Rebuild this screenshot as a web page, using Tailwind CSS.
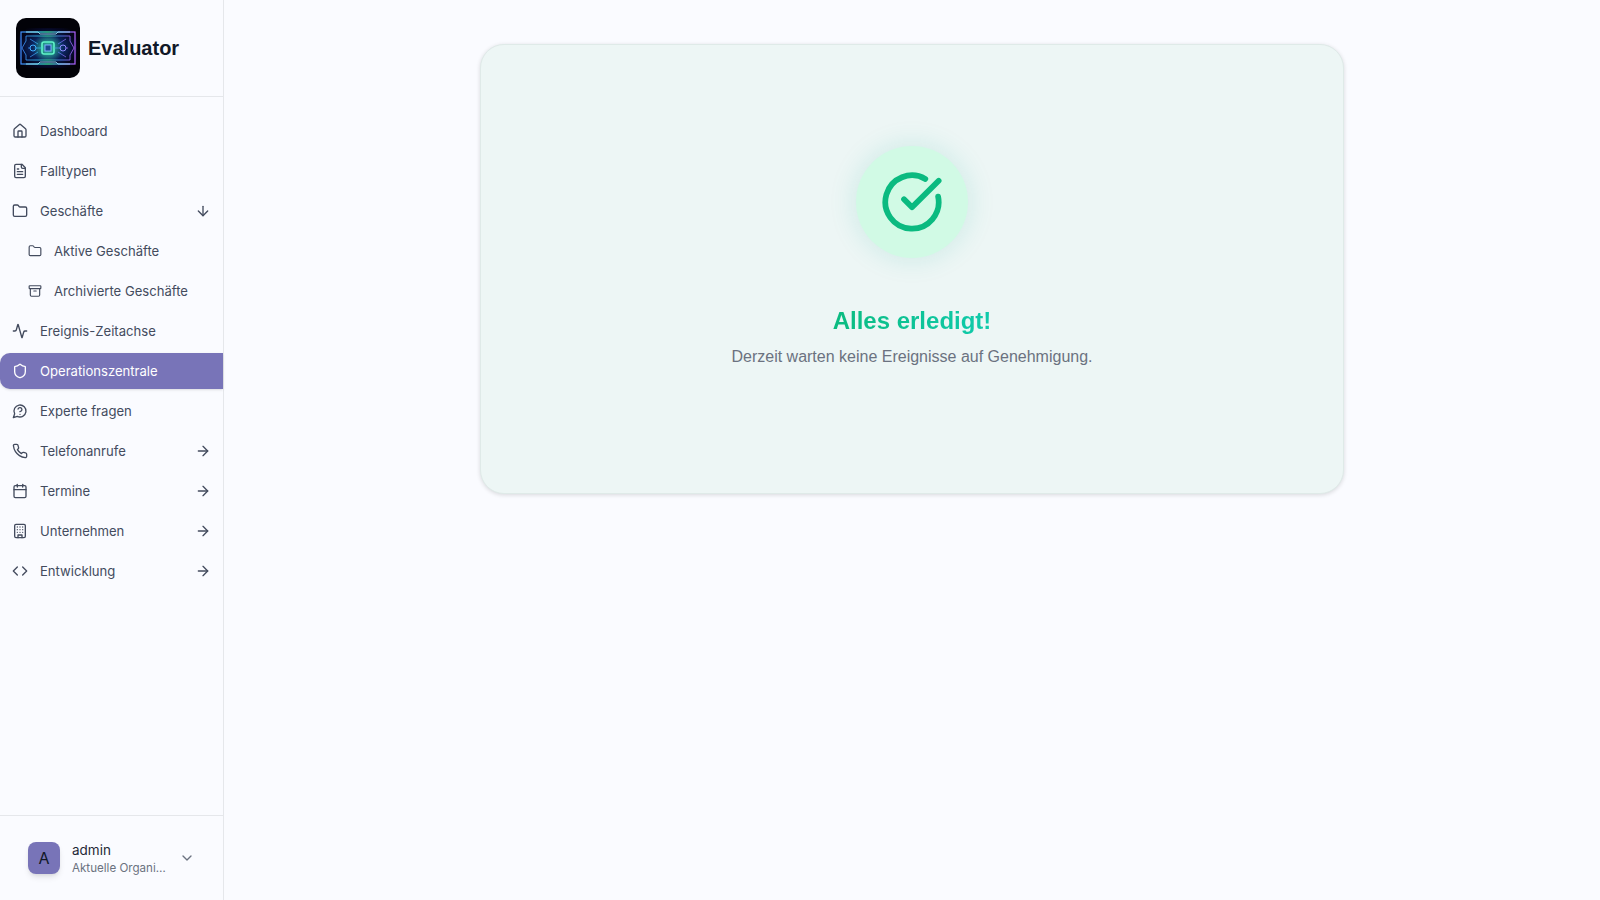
<!DOCTYPE html>
<html lang="de">
<head>
<meta charset="utf-8">
<script src="https://cdn.jsdelivr.net/npm/@tailwindcss/browser@4"></script>
<title>Evaluator</title>
</head>
<body class="bg-[#fafbff] font-['Inter',sans-serif] antialiased">
<div class="flex h-[900px] w-[1600px] overflow-hidden">
  <aside class="flex h-full w-[224px] flex-none flex-col border-r border-[#e5e7eb] bg-[#fafbff]">
    <div class="flex h-[97px] flex-none items-center gap-2 border-b border-[#e5e7eb] pl-4">
      <svg class="h-[60px] w-[64px] flex-none rounded-[10px]" viewBox="0 0 64 60" fill="none">
        <defs>
          <linearGradient id="lg" x1="0" y1="0" x2="1" y2="0">
            <stop offset="0" stop-color="#3f8cff"/><stop offset=".3" stop-color="#35c8f5"/><stop offset=".5" stop-color="#40f0a0"/><stop offset=".75" stop-color="#5a8cff"/><stop offset="1" stop-color="#b060ff"/>
          </linearGradient>
          <radialGradient id="rg" cx=".5" cy=".5" r=".62">
            <stop offset="0" stop-color="#0f5a78"/><stop offset=".45" stop-color="#0b2560"/><stop offset=".8" stop-color="#050620"/><stop offset="1" stop-color="#020208"/>
          </radialGradient>
          <radialGradient id="gl" cx=".5" cy=".5" r=".5">
            <stop offset="0" stop-color="#40f0b0" stop-opacity=".75"/><stop offset="1" stop-color="#40f0b0" stop-opacity="0"/>
          </radialGradient>
        </defs>
        <rect width="64" height="60" fill="#020208"/>
        <rect x="3" y="10" width="58" height="40" fill="url(#rg)"/>
        <circle cx="32" cy="30" r="15" fill="url(#gl)"/>
        <rect x="5" y="14" width="54" height="32" stroke="url(#lg)" stroke-width="1.2"/>
        <path d="M10 18H54V23L58 30L54 37V42H10V37L6 30L10 23Z" stroke="url(#lg)" stroke-width=".8"/>
        <path d="M10 14H22L24 16H40L42 14H54M10 46H22L24 44H40L42 46H54" stroke="#a8f0ff" stroke-width=".8"/>
        <rect x="26" y="24" width="12" height="12" rx="2" stroke="#60f5c8" stroke-width="1.6"/>
        <rect x="29" y="27" width="6" height="6" fill="#1a4a90" stroke="#7fa5ff" stroke-width="1"/>
        <circle cx="17" cy="30" r="3" stroke="#40b0ff" stroke-width="1"/>
        <circle cx="47" cy="30" r="3" stroke="#8f8cff" stroke-width="1"/>
        <path d="M12 30H14M20 30H26M38 30H44M50 30H52M14 21L22 26M50 21L42 26M14 39L22 34M50 39L42 34" stroke="url(#lg)" stroke-width=".7"/>
      </svg>
      <span class="font-['Liberation_Sans',sans-serif] text-[20px] font-bold text-[#111827]">Evaluator</span>
    </div>
    <nav class="flex flex-1 flex-col gap-1 py-4 text-[13.1px] leading-[21px] text-[#434b5e]">
      <a class="flex h-9 items-center gap-3 pl-3 pr-3">
        <svg class="h-4 w-4 flex-none" viewBox="0 0 24 24" fill="none" stroke="currentColor" stroke-width="2" stroke-linecap="round" stroke-linejoin="round"><path d="M15 21v-8a1 1 0 0 0-1-1h-4a1 1 0 0 0-1 1v8"/><path d="M3 10a2 2 0 0 1 .709-1.528l7-5.999a2 2 0 0 1 2.582 0l7 5.999A2 2 0 0 1 21 10v9a2 2 0 0 1-2 2H5a2 2 0 0 1-2-2z"/></svg>
        <span>Dashboard</span>
      </a>
      <a class="flex h-9 items-center gap-3 pl-3 pr-3">
        <svg class="h-4 w-4 flex-none" viewBox="0 0 24 24" fill="none" stroke="currentColor" stroke-width="2" stroke-linecap="round" stroke-linejoin="round"><path d="M15 2H6a2 2 0 0 0-2 2v16a2 2 0 0 0 2 2h12a2 2 0 0 0 2-2V7Z"/><path d="M14 2v4a2 2 0 0 0 2 2h4"/><path d="M10 9H8"/><path d="M16 13H8"/><path d="M16 17H8"/></svg>
        <span>Falltypen</span>
      </a>
      <a class="flex h-9 items-center gap-3 pl-3 pr-3">
        <svg class="h-4 w-4 flex-none" viewBox="0 0 24 24" fill="none" stroke="currentColor" stroke-width="2" stroke-linecap="round" stroke-linejoin="round"><path d="M20 20a2 2 0 0 0 2-2V8a2 2 0 0 0-2-2h-7.9a2 2 0 0 1-1.69-.9L9.6 3.9A2 2 0 0 0 7.93 3H4a2 2 0 0 0-2 2v13a2 2 0 0 0 2 2Z"/></svg>
        <span class="flex-1">Geschäfte</span>
        <svg class="h-4 w-4 flex-none" viewBox="0 0 24 24" fill="none" stroke="currentColor" stroke-width="2" stroke-linecap="round" stroke-linejoin="round"><path d="M12 5v14"/><path d="m19 12-7 7-7-7"/></svg>
      </a>
      <a class="flex h-9 items-center gap-3 pl-7 pr-3">
        <svg class="h-[14px] w-[14px] flex-none" viewBox="0 0 24 24" fill="none" stroke="currentColor" stroke-width="2" stroke-linecap="round" stroke-linejoin="round"><path d="M20 20a2 2 0 0 0 2-2V8a2 2 0 0 0-2-2h-7.9a2 2 0 0 1-1.69-.9L9.6 3.9A2 2 0 0 0 7.93 3H4a2 2 0 0 0-2 2v13a2 2 0 0 0 2 2Z"/></svg>
        <span>Aktive Geschäfte</span>
      </a>
      <a class="flex h-9 items-center gap-3 pl-7 pr-3">
        <svg class="h-[14px] w-[14px] flex-none" viewBox="0 0 24 24" fill="none" stroke="currentColor" stroke-width="2" stroke-linecap="round" stroke-linejoin="round"><rect width="20" height="5" x="2" y="3" rx="1"/><path d="M4 8v11a2 2 0 0 0 2 2h12a2 2 0 0 0 2-2V8"/><path d="M10 12h4"/></svg>
        <span>Archivierte Geschäfte</span>
      </a>
      <a class="flex h-9 items-center gap-3 pl-3 pr-3">
        <svg class="h-4 w-4 flex-none" viewBox="0 0 24 24" fill="none" stroke="currentColor" stroke-width="2" stroke-linecap="round" stroke-linejoin="round"><path d="M22 12h-2.48a2 2 0 0 0-1.93 1.46l-2.35 8.36a.25.25 0 0 1-.48 0L9.24 2.18a.25.25 0 0 0-.48 0l-2.35 8.36A2 2 0 0 1 4.49 12H2"/></svg>
        <span>Ereignis-Zeitachse</span>
      </a>
      <a class="flex h-9 items-center gap-3 rounded-l-[10px] bg-[#7874b8] pl-3 pr-3 text-white shadow-sm">
        <svg class="h-4 w-4 flex-none" viewBox="0 0 24 24" fill="none" stroke="currentColor" stroke-width="2" stroke-linecap="round" stroke-linejoin="round"><path d="M20 13c0 5-3.5 7.5-7.66 8.95a1 1 0 0 1-.67-.01C7.5 20.5 4 18 4 13V6a1 1 0 0 1 1-1c2 0 4.5-1.2 6.24-2.72a1.17 1.17 0 0 1 1.52 0C14.51 3.81 17 5 19 5a1 1 0 0 1 1 1z"/></svg>
        <span>Operationszentrale</span>
      </a>
      <a class="flex h-9 items-center gap-3 pl-3 pr-3">
        <svg class="h-4 w-4 flex-none" viewBox="0 0 24 24" fill="none" stroke="currentColor" stroke-width="2" stroke-linecap="round" stroke-linejoin="round"><path d="M7.9 20A9 9 0 1 0 4 16.1L2 22Z"/><path d="M9.09 9a3 3 0 0 1 5.83 1c0 2-3 3-3 3"/><path d="M12 17h.01"/></svg>
        <span>Experte fragen</span>
      </a>
      <a class="flex h-9 items-center gap-3 pl-3 pr-3">
        <svg class="h-4 w-4 flex-none" viewBox="0 0 24 24" fill="none" stroke="currentColor" stroke-width="2" stroke-linecap="round" stroke-linejoin="round"><path d="M22 16.92v3a2 2 0 0 1-2.18 2 19.79 19.79 0 0 1-8.63-3.07 19.5 19.5 0 0 1-6-6 19.79 19.79 0 0 1-3.07-8.67A2 2 0 0 1 4.11 2h3a2 2 0 0 1 2 1.72 12.84 12.84 0 0 0 .7 2.81 2 2 0 0 1-.45 2.11L8.09 9.91a16 16 0 0 0 6 6l1.27-1.27a2 2 0 0 1 2.11-.45 12.84 12.84 0 0 0 2.81.7A2 2 0 0 1 22 16.92z"/></svg>
        <span class="flex-1">Telefonanrufe</span>
        <svg class="h-4 w-4 flex-none" viewBox="0 0 24 24" fill="none" stroke="currentColor" stroke-width="2" stroke-linecap="round" stroke-linejoin="round"><path d="M5 12h14"/><path d="m12 5 7 7-7 7"/></svg>
      </a>
      <a class="flex h-9 items-center gap-3 pl-3 pr-3">
        <svg class="h-4 w-4 flex-none" viewBox="0 0 24 24" fill="none" stroke="currentColor" stroke-width="2" stroke-linecap="round" stroke-linejoin="round"><path d="M8 2v4"/><path d="M16 2v4"/><rect width="18" height="18" x="3" y="4" rx="2"/><path d="M3 10h18"/></svg>
        <span class="flex-1">Termine</span>
        <svg class="h-4 w-4 flex-none" viewBox="0 0 24 24" fill="none" stroke="currentColor" stroke-width="2" stroke-linecap="round" stroke-linejoin="round"><path d="M5 12h14"/><path d="m12 5 7 7-7 7"/></svg>
      </a>
      <a class="flex h-9 items-center gap-3 pl-3 pr-3">
        <svg class="h-4 w-4 flex-none" viewBox="0 0 24 24" fill="none" stroke="currentColor" stroke-width="2" stroke-linecap="round" stroke-linejoin="round"><rect width="16" height="20" x="4" y="2" rx="2"/><path d="M9 22v-4h6v4"/><path d="M8 6h.01"/><path d="M16 6h.01"/><path d="M12 6h.01"/><path d="M12 10h.01"/><path d="M12 14h.01"/><path d="M16 10h.01"/><path d="M16 14h.01"/><path d="M8 10h.01"/><path d="M8 14h.01"/></svg>
        <span class="flex-1">Unternehmen</span>
        <svg class="h-4 w-4 flex-none" viewBox="0 0 24 24" fill="none" stroke="currentColor" stroke-width="2" stroke-linecap="round" stroke-linejoin="round"><path d="M5 12h14"/><path d="m12 5 7 7-7 7"/></svg>
      </a>
      <a class="flex h-9 items-center gap-3 pl-3 pr-3">
        <svg class="h-4 w-4 flex-none" viewBox="0 0 24 24" fill="none" stroke="currentColor" stroke-width="2" stroke-linecap="round" stroke-linejoin="round"><path d="M16 18l6-6-6-6"/><path d="M8 6l-6 6 6 6"/></svg>
        <span class="flex-1">Entwicklung</span>
        <svg class="h-4 w-4 flex-none" viewBox="0 0 24 24" fill="none" stroke="currentColor" stroke-width="2" stroke-linecap="round" stroke-linejoin="round"><path d="M5 12h14"/><path d="m12 5 7 7-7 7"/></svg>
      </a>
    </nav>
    <div class="flex h-[85px] flex-none items-center border-t border-[#e5e7eb] pl-7 pr-7">
      <div class="flex h-8 w-8 flex-none items-center justify-center rounded-lg bg-[#7874b8] text-[16px] text-[#111827] shadow-md">A</div>
      <div class="ml-3 flex w-[100px] flex-col">
        <span class="text-[13.5px] leading-[18px] text-[#1f2937]">admin</span>
        <span class="mt-px whitespace-nowrap text-[11.6px] leading-[16px] text-[#6b7280]">Aktuelle Organi…</span>
      </div>
      <svg class="ml-auto h-4 w-4 flex-none text-[#6b7280]" viewBox="0 0 24 24" fill="none" stroke="currentColor" stroke-width="2" stroke-linecap="round" stroke-linejoin="round"><path d="m6 9 6 6 6-6"/></svg>
    </div>
  </aside>
  <main class="flex min-w-0 flex-1 justify-center pt-[44px]">
    <section class="flex h-[450px] w-[864px] flex-col items-center rounded-3xl border border-[#dfeae8] bg-[#edf6f5] pt-[101px] shadow-[0_1px_4px_rgba(0,0,0,0.14)]">
      <div class="flex h-[112px] w-[112px] items-center justify-center rounded-full bg-[#d1fae5] shadow-[0_0_28px_rgba(20,170,150,0.16)]">
        <svg class="h-16 w-16 text-[#0bba80]" viewBox="0 0 24 24" fill="none" stroke="currentColor" stroke-width="2.15" stroke-linecap="round" stroke-linejoin="round"><path d="M21.801 10A10 10 0 1 1 17 3.335"/><path d="m9 11 3 3L22 4"/></svg>
      </div>
      <h2 class="mt-[47px] bg-gradient-to-r from-[#0cbb80] to-[#10cbac] bg-clip-text font-['Liberation_Sans',sans-serif] text-2xl leading-8 font-bold text-transparent">Alles erledigt!</h2>
      <p class="mt-[8px] font-['Liberation_Sans',sans-serif] text-[16px] leading-6 text-[#6b7280]">Derzeit warten keine Ereignisse auf Genehmigung.</p>
    </section>
  </main>
</div>
</body>
</html>
